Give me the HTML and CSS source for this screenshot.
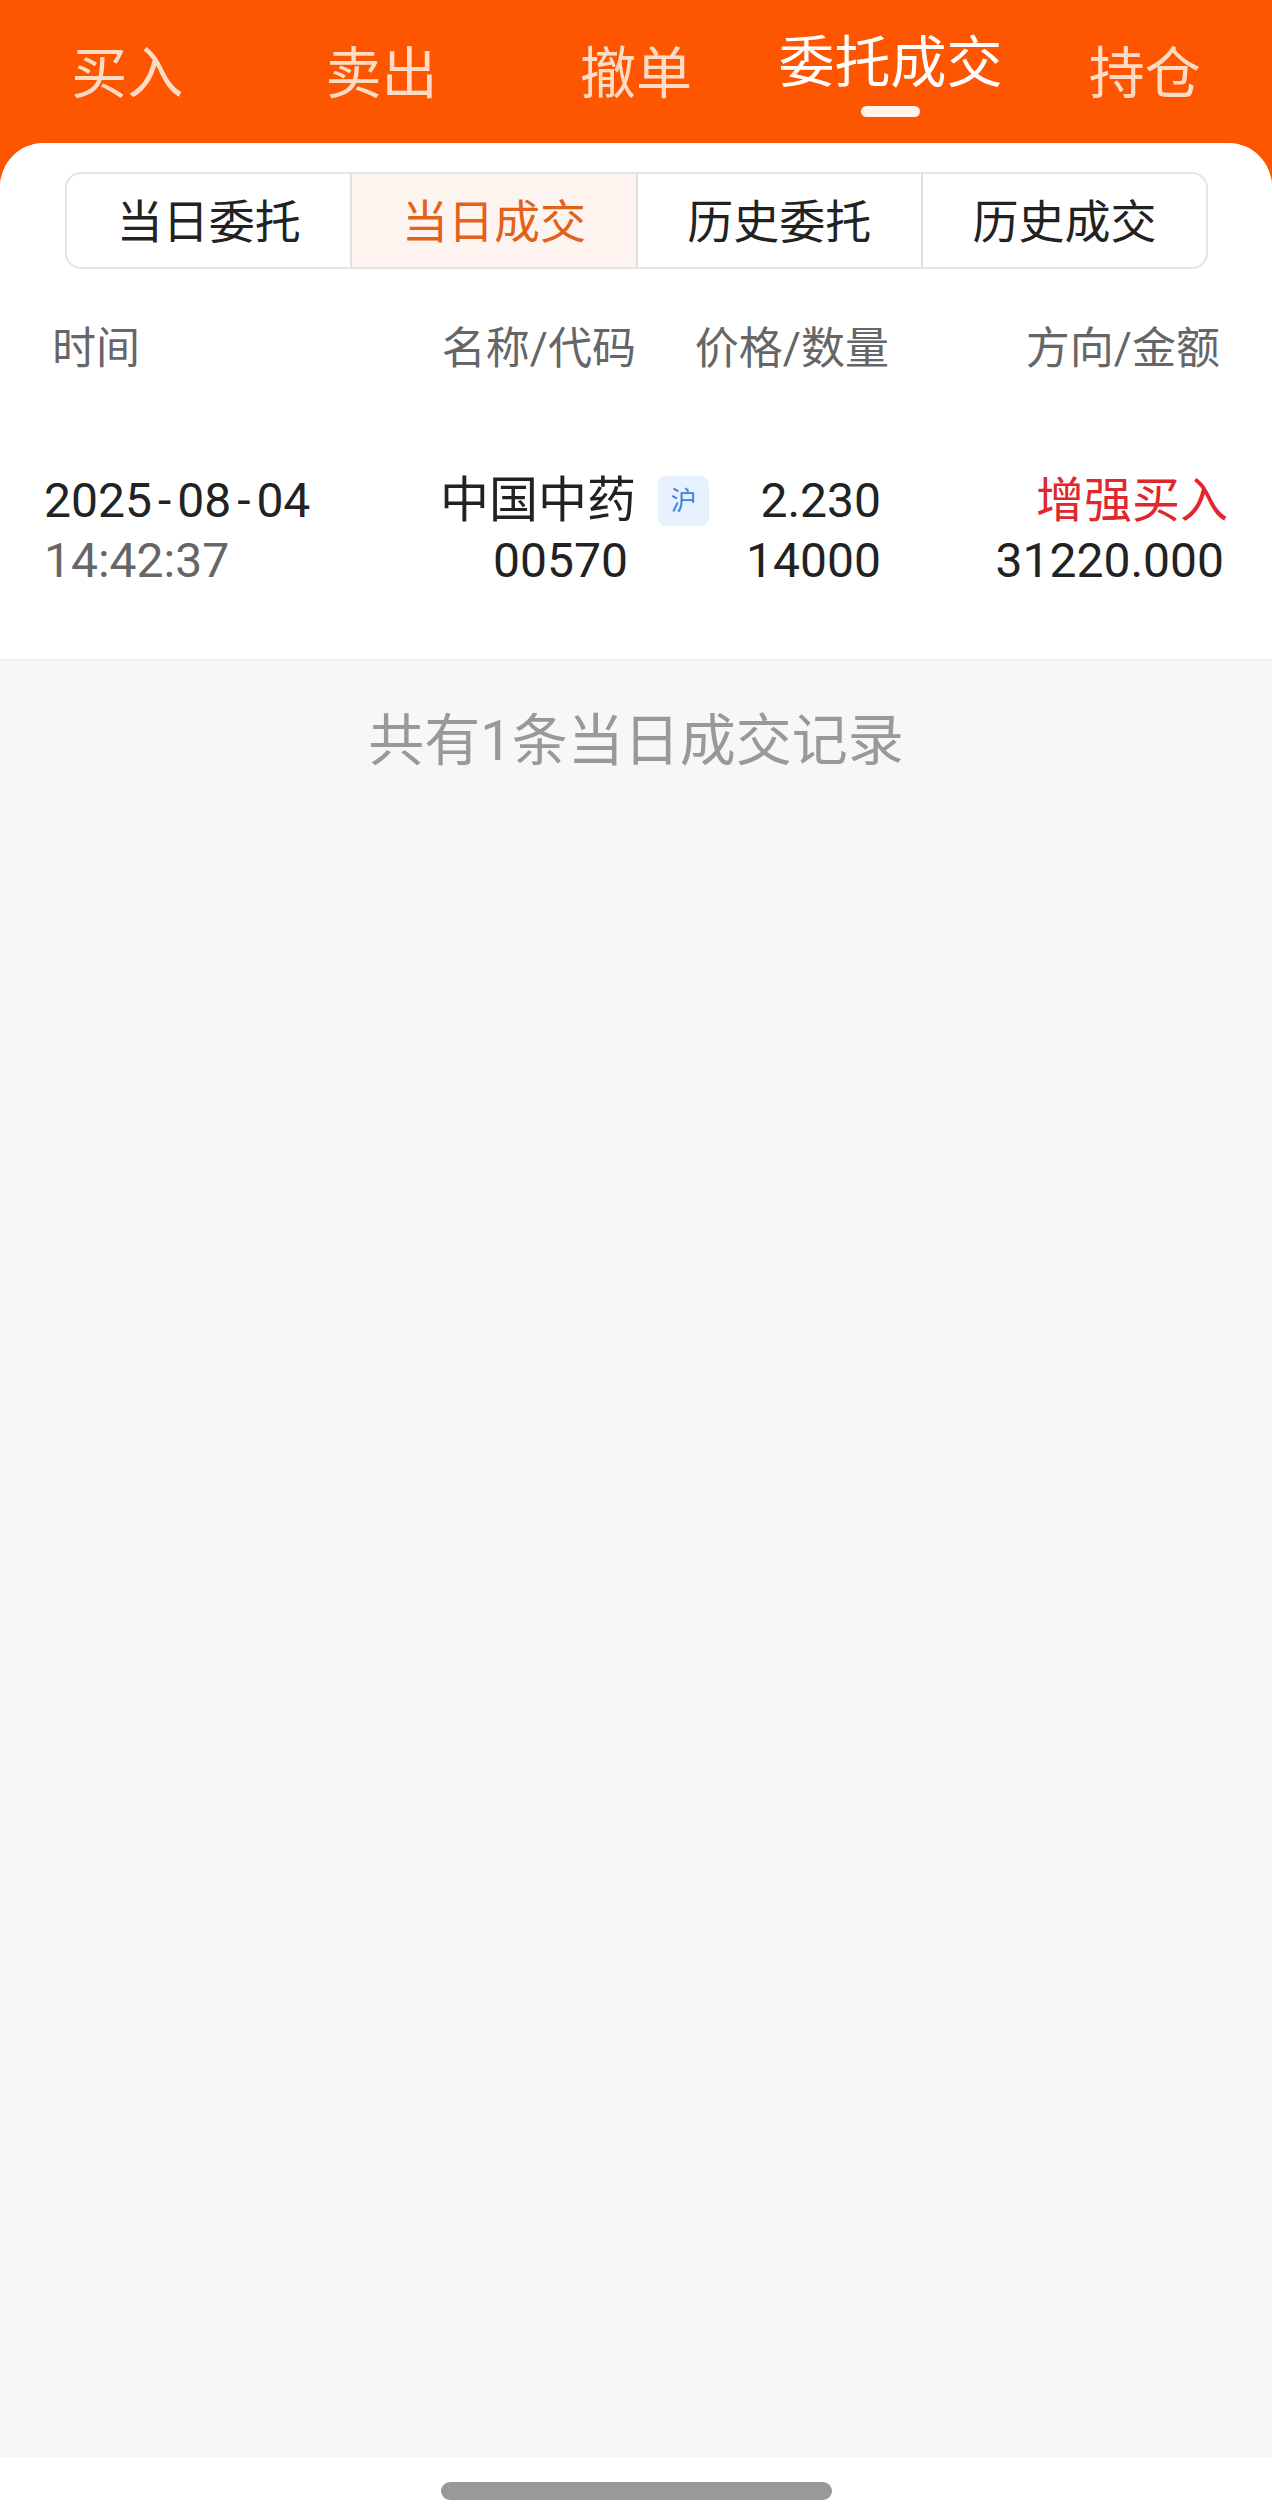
FILE: index.html
```html
<!DOCTYPE html>
<html lang="zh-CN">
<head>
<meta charset="utf-8">
<title>委托成交</title>
<link rel="stylesheet" href="styles.css">
</head>
<body>
<div class="page">
  <nav class="topbar">
    <div class="tab">买入</div>
    <div class="tab">卖出</div>
    <div class="tab">撤单</div>
    <div class="tab active">委托成交<span class="indicator"></span></div>
    <div class="tab">持仓</div>
  </nav>
  <main class="card">
    <section class="panel">
      <div class="segments">
        <div class="seg">当日委托</div>
        <div class="seg active">当日成交</div>
        <div class="seg">历史委托</div>
        <div class="seg">历史成交</div>
      </div>
      <div class="grid head">
        <div class="c-time">时间</div>
        <div class="c-name">名称/代码</div>
        <div class="c-price">价格/数量</div>
        <div class="c-dir">方向/金额</div>
      </div>
      <div class="grid row">
        <div class="c-time date">2025<span class="dash">-</span>08<span class="dash">-</span>04</div>
        <div class="c-name">中国中药</div>
        <div class="c-badge"><span class="badge">沪</span></div>
        <div class="c-num">2.230</div>
        <div class="c-dir buy">增强买入</div>
        <div class="c-time sub">14:42:37</div>
        <div class="c-name code">00570</div>
        <div class="c-badge"></div>
        <div class="c-num">14000</div>
        <div class="c-dir amount">31220.000</div>
      </div>
    </section>
    <section class="empty">
      <p class="empty-text">共有1条当日成交记录</p>
    </section>
  </main>
  <footer class="navbar"><span class="handle"></span></footer>
</div>
</body>
</html>
```
FILE: styles.css
```css
* { box-sizing: border-box; }
html, body { margin: 0; padding: 0; }
body {
  width: 1272px;
  height: 2520px;
  font-family: Roboto, "Noto Sans CJK SC", sans-serif;
  background: #fff;
  overflow: hidden;
}
.page {
  display: flex;
  flex-direction: column;
  height: 2520px;
  background: #fe5500;
}
.topbar {
  display: flex;
  height: 143px;
  flex-shrink: 0;
}
.tab {
  flex: 1;
  display: flex;
  flex-direction: column;
  align-items: center;
  padding-top: 44px;
  font-size: 56px;
  line-height: 60px;
  color: #fddcc6;
}
.tab.active {
  padding-top: 33px;
  color: #fff;
}
.indicator {
  display: block;
  width: 59px;
  height: 11px;
  margin-top: 13px;
  border-radius: 6px;
  background: #fff3ea;
}
.card {
  flex: 1;
  display: flex;
  flex-direction: column;
  background: #f6f7f9;
  border-radius: 44px 44px 0 0;
  overflow: hidden;
}
.panel {
  background: #fff;
  padding-top: 29px;
  border-bottom: 2px solid #eeeff1;
}
.segments {
  display: flex;
  height: 97px;
  margin: 0 64px 0 65px;
  border: 2px solid #e4e4e4;
  border-radius: 16px;
  overflow: hidden;
}
.seg {
  flex: 1;
  display: flex;
  align-items: center;
  justify-content: center;
  font-size: 46px;
  color: #222;
  padding-bottom: 6px;
}
.seg + .seg { border-left: 2px solid #e0e0e0; }
.seg.active {
  background: #fdf4ef;
  color: #e3621b;
}
.grid {
  display: grid;
  grid-template-columns: 396px 196px 84px 169px 339px;
  padding: 0 44px;
}
.head {
  margin-top: 50px;
  font-size: 44px;
  line-height: 60px;
  color: #666;
}
.head .c-time { padding-left: 8px; }
.head .c-price { grid-column: 3 / 5; text-align: right; }
.head .c-dir { padding-right: 8px; }
.c-name, .c-num, .c-dir, .c-price { text-align: right; white-space: nowrap; }
.row {
  padding-top: 92px;
  padding-bottom: 68px;
  grid-auto-rows: 60px;
  font-size: 48px;
  line-height: 60px;
  color: #222;
}
.row .c-name { font-size: 49px; }
.row .code { font-size: 48px; padding-right: 8px; }
.row .c-num { padding-right: 8px; }
.row .amount { padding-right: 4px; }
.dash { margin: 0 6px; }
.sub { color: #666; }
.buy { color: #e0272d; }
.c-badge {
  display: flex;
  align-items: center;
}
.badge {
  display: flex;
  align-items: center;
  justify-content: center;
  width: 51px;
  height: 50px;
  margin-left: 22px;
  border-radius: 8px;
  background: #e7f1fd;
  color: #3b84de;
  font-size: 26px;
  line-height: 1;
}
.empty {
  flex: 1;
  padding-top: 50px;
}
.empty-text {
  margin: 0;
  text-align: center;
  font-size: 56px;
  line-height: 60px;
  color: #999;
}
.navbar {
  height: 63px;
  flex-shrink: 0;
  background: #fff;
  display: flex;
  justify-content: center;
  padding-top: 25px;
}
.handle {
  display: block;
  width: 391px;
  height: 18px;
  border-radius: 9px;
  background: #999;
}
```
